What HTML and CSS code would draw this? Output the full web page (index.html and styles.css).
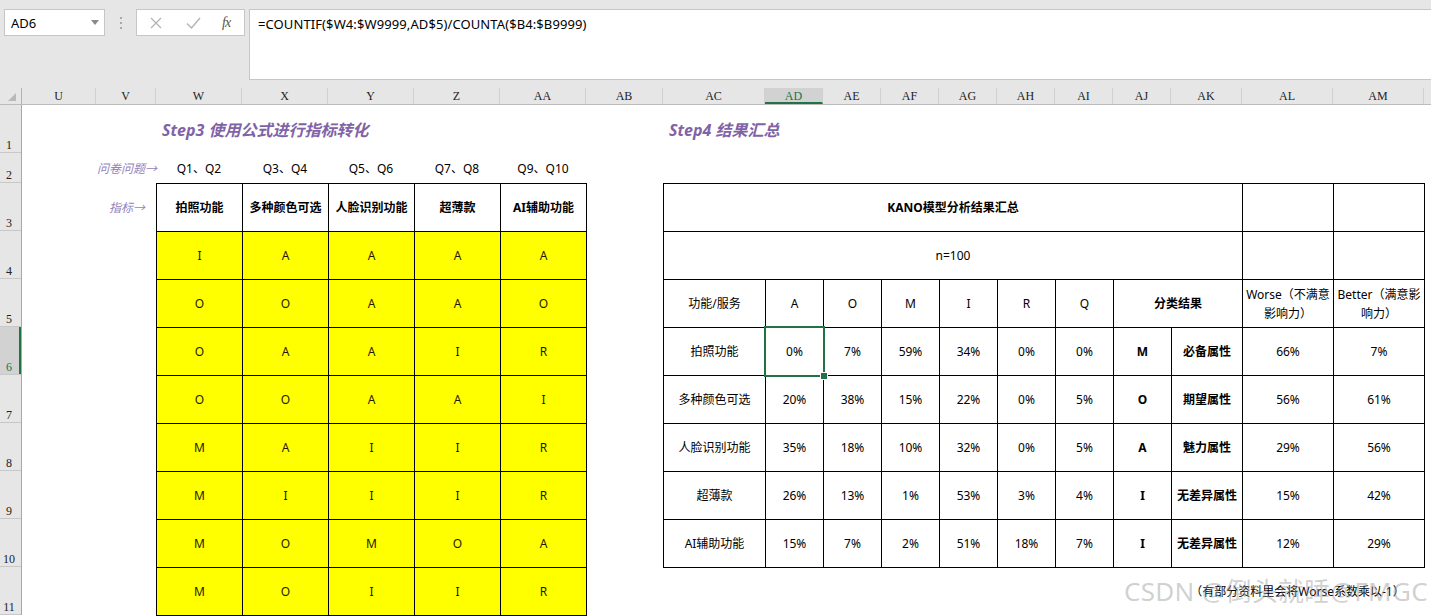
FILE: index.html
```html
<!DOCTYPE html>
<html lang="zh-CN">
<head>
<meta charset="utf-8">
<title>KANO</title>
<link rel="stylesheet" href="styles.css">
</head>
<body>
<div class="app">
  <div class="topbar">
    <div class="namebox"><span>AD6</span><svg class="dd" width="8" height="5" viewBox="0 0 8 5"><polygon points="0,0 8,0 4,5" fill="#8a8a8a"/></svg></div>
    <div class="grip"><i></i><i></i><i></i></div>
    <div class="fnbox">
      <svg class="ico" width="12" height="12" viewBox="0 0 12 12"><path d="M1 1 L11 11 M11 1 L1 11" stroke="#b4b4b4" stroke-width="1.3" fill="none"/></svg>
      <svg class="ico" width="15" height="12" viewBox="0 0 15 12"><path d="M1 6.5 L5.5 11 L14 1" stroke="#b4b4b4" stroke-width="1.4" fill="none"/></svg>
      <span class="fx">fx</span>
    </div>
    <div class="formula">=COUNTIF($W4:$W9999,AD$5)/COUNTA($B4:$B9999)</div>
  </div>

  <div class="colheads">
    <div class="corner"><svg width="8" height="8" viewBox="0 0 8 8"><polygon points="8,0 8,8 0,8" fill="#b8b8b8"/></svg></div>
    <div class="ch w74">U</div>
    <div class="ch w60">V</div>
    <div class="ch w86">W</div>
    <div class="ch w86">X</div>
    <div class="ch w86">Y</div>
    <div class="ch w86">Z</div>
    <div class="ch w86">AA</div>
    <div class="ch w77">AB</div>
    <div class="ch w102">AC</div>
    <div class="ch w58 sel">AD</div>
    <div class="ch w58">AE</div>
    <div class="ch w58">AF</div>
    <div class="ch w58">AG</div>
    <div class="ch w58">AH</div>
    <div class="ch w58">AI</div>
    <div class="ch w58">AJ</div>
    <div class="ch w71">AK</div>
    <div class="ch w91">AL</div>
    <div class="ch w91">AM</div>
    <div class="ch rest"></div>
  </div>

  <div class="body">
    <div class="rowheads">
      <div class="rh h48">1</div>
      <div class="rh h30">2</div>
      <div class="rh h48">3</div>
      <div class="rh h48">4</div>
      <div class="rh h48">5</div>
      <div class="rh h48 sel">6</div>
      <div class="rh h48">7</div>
      <div class="rh h48">8</div>
      <div class="rh h48">9</div>
      <div class="rh h48">10</div>
      <div class="rh h48">11</div>
    </div>

    <div class="grid">
      <div class="title t3">Step3 使用公式进行指标转化</div>
      <div class="title t4">Step4 结果汇总</div>

      <div class="lbl lbl-q">问卷问题→</div>
      <div class="qrow">
        <div class="q">Q1、Q2</div>
        <div class="q">Q3、Q4</div>
        <div class="q">Q5、Q6</div>
        <div class="q">Q7、Q8</div>
        <div class="q">Q9、Q10</div>
      </div>
      <div class="lbl lbl-i">指标→</div>

      <div class="ltable">
        <div class="c b">拍照功能</div><div class="c b">多种颜色可选</div><div class="c b">人脸识别功能</div><div class="c b">超薄款</div><div class="c b">AI辅助功能</div>
        <div class="c y">I</div><div class="c y">A</div><div class="c y">A</div><div class="c y">A</div><div class="c y">A</div>
        <div class="c y">O</div><div class="c y">O</div><div class="c y">A</div><div class="c y">A</div><div class="c y">O</div>
        <div class="c y">O</div><div class="c y">A</div><div class="c y">A</div><div class="c y">I</div><div class="c y">R</div>
        <div class="c y">O</div><div class="c y">O</div><div class="c y">A</div><div class="c y">A</div><div class="c y">I</div>
        <div class="c y">M</div><div class="c y">A</div><div class="c y">I</div><div class="c y">I</div><div class="c y">R</div>
        <div class="c y">M</div><div class="c y">I</div><div class="c y">I</div><div class="c y">I</div><div class="c y">R</div>
        <div class="c y">M</div><div class="c y">O</div><div class="c y">M</div><div class="c y">O</div><div class="c y">A</div>
        <div class="c y">M</div><div class="c y">O</div><div class="c y">I</div><div class="c y">I</div><div class="c y">R</div>
      </div>

      <div class="rtable">
        <div class="c b span9">KANO模型分析结果汇总</div><div class="c"></div><div class="c"></div>
        <div class="c span9">n=100</div><div class="c"></div><div class="c"></div>

        <div class="c">功能/服务</div><div class="c">A</div><div class="c">O</div><div class="c">M</div><div class="c">I</div><div class="c">R</div><div class="c">Q</div>
        <div class="c b span2">分类结果</div>
        <div class="c wrap">Worse（不满意<br>影响力）</div>
        <div class="c wrap">Better（满意影<br>响力）</div>

        <div class="c">拍照功能</div><div class="c active">0%</div><div class="c">7%</div><div class="c">59%</div><div class="c">34%</div><div class="c">0%</div><div class="c">0%</div><div class="c b">M</div><div class="c b">必备属性</div><div class="c">66%</div><div class="c">7%</div>

        <div class="c">多种颜色可选</div><div class="c">20%</div><div class="c">38%</div><div class="c">15%</div><div class="c">22%</div><div class="c">0%</div><div class="c">5%</div><div class="c b">O</div><div class="c b">期望属性</div><div class="c">56%</div><div class="c">61%</div>

        <div class="c">人脸识别功能</div><div class="c">35%</div><div class="c">18%</div><div class="c">10%</div><div class="c">32%</div><div class="c">0%</div><div class="c">5%</div><div class="c b">A</div><div class="c b">魅力属性</div><div class="c">29%</div><div class="c">56%</div>

        <div class="c">超薄款</div><div class="c">26%</div><div class="c">13%</div><div class="c">1%</div><div class="c">53%</div><div class="c">3%</div><div class="c">4%</div><div class="c b">I</div><div class="c b">无差异属性</div><div class="c">15%</div><div class="c">42%</div>

        <div class="c">AI辅助功能</div><div class="c">15%</div><div class="c">7%</div><div class="c">2%</div><div class="c">51%</div><div class="c">18%</div><div class="c">7%</div><div class="c b">I</div><div class="c b">无差异属性</div><div class="c">12%</div><div class="c">29%</div>
      </div>

      <div class="note">（有部分资料里会将Worse系数乘以-1）</div>
    </div>
  </div>

  <div class="watermark">CSDN @倒头就睡@FMGC</div>
</div>
</body>
</html>
```

FILE: styles.css
```css
* { box-sizing: border-box; }
html, body { margin: 0; padding: 0; }
body {
  width: 1431px;
  height: 616px;
  overflow: hidden;
  background: #fff;
  font-family: "Noto Sans", "Noto Sans CJK SC", sans-serif;
  color: #000;
}
.app { position: relative; width: 1431px; height: 616px; overflow: hidden; }

/* ---------- formula bar ---------- */
.topbar {
  height: 88px;
  background: #e6e6e6;
  display: flex;
  align-items: flex-start;
  padding-top: 9px;
}
.namebox {
  margin-left: 4px;
  width: 101px;
  height: 27px;
  background: #fff;
  border: 1px solid #c6c6c6;
  display: flex;
  align-items: center;
  justify-content: space-between;
  padding: 0 5px 0 6px;
  font-size: 13px;
}
.grip {
  width: 31px;
  height: 27px;
  display: flex;
  flex-direction: column;
  align-items: center;
  justify-content: center;
  gap: 3px;
}
.grip i { display: block; width: 2px; height: 2px; background: #a8a8a8; }
.fnbox {
  width: 109px;
  height: 27px;
  background: #fff;
  border: 1px solid #c6c6c6;
  display: flex;
  align-items: center;
  padding-left: 13px;
}
.fnbox .ico:nth-child(1) { margin-right: 24px; }
.fnbox .ico:nth-child(2) { margin-right: 21px; }
.fx {
  font-family: "Liberation Serif", serif;
  font-style: italic;
  font-size: 14px;
  color: #555;
  letter-spacing: -1px;
}
.formula {
  margin-left: 4px;
  flex: 1;
  height: 71px;
  background: #fff;
  border: 1px solid #c6c6c6;
  border-right: none;
  padding: 4px 8px;
  font-size: 13px;
  line-height: 20px;
  letter-spacing: 0.1px;
}

/* ---------- column headers ---------- */
.colheads {
  display: flex;
  height: 17px;
  background: #e6e6e6;
  border-bottom: 1px solid #bcbcbc;
}
.corner {
  width: 22px;
  border-right: 1px solid #b4b4b4;
  display: flex;
  align-items: flex-end;
  justify-content: flex-end;
  padding: 0 5px 3px 0;
}
.ch {
  flex: none;
  border-right: 1px solid #d0d0d0;
  font-family: "Liberation Serif", serif;
  font-size: 12px;
  text-align: center;
  line-height: 16px;
  color: #222;
}
.ch.sel { background: #d2d2d2; color: #217346; border-bottom: 2px solid #217346; }
.ch.rest { flex: 1; border-right: none; }
.w58 { width: 58px; } .w60 { width: 60px; } .w71 { width: 71px; } .w74 { width: 74px; }
.w77 { width: 77px; } .w86 { width: 86px; } .w91 { width: 91px; } .w102 { width: 102px; }

/* ---------- body ---------- */
.body { display: flex; }
.rowheads { width: 22px; flex: none; background: #e6e6e6; border-right: 1px solid #a8a8a8; }
.rh {
  border-bottom: 1px solid #c8c8c8;
  display: flex;
  align-items: flex-end;
  justify-content: center;
  padding-right: 3px;
  font-family: "Liberation Serif", serif;
  font-size: 12px;
  line-height: 14px;
  color: #222;
}
.rh.sel { background: #d2d2d2; color: #217346; box-shadow: inset -2px 0 0 #217346; }
.h48 { height: 48px; }
.h30 { height: 30px; }

.grid {
  flex: 1;
  display: grid;
  grid-template-columns: 74px 60px repeat(5, 86px) 77px 102px repeat(7, 58px) 71px 91px 91px 1fr;
  grid-template-rows: 48px 30px repeat(9, 48px);
}

.title {
  grid-row: 1;
  display: flex;
  align-items: center;
  padding-left: 6px;
  font-size: 16px;
  font-weight: bold;
  font-style: italic;
  color: #7f63a6;
  white-space: nowrap;
}
.t3 { grid-column: 3 / 9; }
.t4 { grid-column: 9 / 18; }

.lbl {
  grid-column: 1 / 3;
  display: flex;
  align-items: center;
  justify-content: flex-end;
  font-size: 12px;
  font-style: italic;
  color: #9383bd;
  white-space: nowrap;
}
.lbl-q { grid-row: 2; margin-right: -1px; }
.lbl-i { grid-row: 3; padding-right: 11px; }

.qrow {
  grid-column: 3 / 8;
  grid-row: 2;
  display: grid;
  grid-template-columns: repeat(5, 86px);
}
.q { display: flex; align-items: center; justify-content: center; font-size: 12px; }

.ltable, .rtable {
  display: grid;
  gap: 1px;
  padding: 1px;
  background: #000;
  align-self: start;
  justify-self: start;
}
.ltable {
  grid-column: 3 / 8;
  grid-row: 3 / 12;
  grid-template-columns: repeat(5, 85px);
  grid-template-rows: repeat(9, 47px);
}
.rtable {
  grid-column: 9 / 20;
  grid-row: 3 / 11;
  grid-template-columns: 101px repeat(7, 57px) 70px 90px 90px;
  grid-template-rows: repeat(8, 47px);
}
.c {
  background: #fff;
  display: flex;
  align-items: center;
  justify-content: center;
  text-align: center;
  font-size: 12px;
  line-height: 19px;
  white-space: nowrap;
}
.c.y { background: #ffff00; color: #1c1c00; }
.c.b { font-weight: bold; }
.span9 { grid-column: span 9; }
.span2 { grid-column: span 2; }
.c.wrap { white-space: normal; }
.c.active {
  position: relative;
  z-index: 2;
  outline: 2px solid #217346;
  outline-offset: 0px;
}
.c.active::after {
  content: "";
  position: absolute;
  right: -5px;
  bottom: -5px;
  width: 6px;
  height: 6px;
  background: #217346;
  border: 1px solid #fff;
}

.note {
  grid-column: 17 / 20;
  grid-row: 11;
  display: flex;
  align-items: center;
  justify-content: center;
  font-size: 12px;
  white-space: nowrap;
}

.watermark {
  position: absolute;
  left: 1124px;
  top: 574px;
  font-size: 26px;
  line-height: 34px;
  letter-spacing: 0.3px;
  color: rgba(150, 150, 150, 0.45);
  white-space: nowrap;
  pointer-events: none;
}
```
